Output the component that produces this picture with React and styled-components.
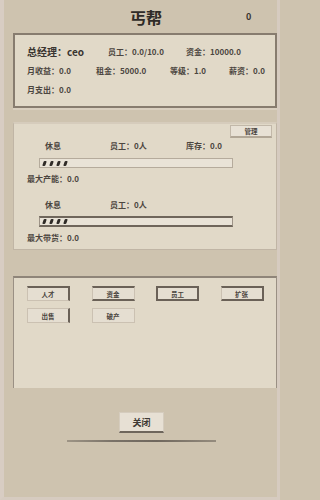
import React from "react";
import styled, { createGlobalStyle, css } from "styled-components";

const GlobalStyle = createGlobalStyle`
  html, body {
    margin: 0;
    padding: 0;
    background: #cec3af;
  }
  * {
    box-sizing: border-box;
  }
`;

const Frame = styled.div`
  width: 280px;
  height: 500px;
  background: #cec3af;
  border-left: 4px solid #d8cdc3;
  border-right: 3px solid #d6cbc0;
  border-bottom: 3px solid #d6cbc0;
  display: flex;
  flex-direction: column;
  font-family: "Noto Sans CJK SC", "Noto Sans", sans-serif;
  color: #46403a;
  overflow: hidden;
`;

const Header = styled.div`
  height: 33px;
  display: flex;
  align-items: center;
  position: relative;
`;

const Title = styled.h1`
  margin: 0 0 0 126px;
  font-size: 16px;
  font-weight: 700;
  color: #2f2b27;
  line-height: 1;
`;

const Count = styled.span`
  margin-left: 84px;
  font-size: 9px;
  font-weight: 700;
  color: #3a3531;
`;

const Panel = styled.section`
  margin-left: 9px;
  margin-top: ${(p) => p.$top || 0}px;
  height: ${(p) => p.$height}px;
  background: #e1d9c8;
  ${(p) =>
    p.$tone === "dark" &&
    css`
      border: 2px solid #877c6f;
      box-shadow: 0 2px 0 #d9cfbf;
    `}
  ${(p) =>
    p.$tone === "light" &&
    css`
      border: 1px solid #c0b5a5;
      border-top: 2px solid #d6ccbc;
    `}
  ${(p) =>
    p.$tone === "mid" &&
    css`
      border: 1px solid #9a9084;
      border-top: 2px solid #8f8579;
      border-bottom: none;
    `}
`;

const InfoBody = styled.div`
  padding: 7px 0 0 12px;
`;

const InfoRow = styled.div`
  display: flex;
  align-items: center;
  height: 19px;
`;

const Cell = styled.span`
  flex: 0 0 ${(p) => (p.$w ? `${p.$w}px` : "auto")};
  font-size: ${(p) => (p.$big ? 10 : 8)}px;
  font-weight: 700;
  color: ${(p) => (p.$big ? "#3a3531" : "#4c463f")};
  white-space: nowrap;
`;

const ToolRow = styled.div`
  display: flex;
  justify-content: flex-end;
  padding: 1px 4px 0 0;
`;

const SmallButton = styled.button`
  width: 42px;
  height: 13px;
  padding: 0;
  font-family: inherit;
  font-size: 6.5px;
  font-weight: 700;
  color: #4a443e;
  background: #e8e1d5;
  border: 1px solid #c2b8a9;
  border-bottom: 2px solid #b1a696;
`;

const WorkRow = styled.div`
  display: flex;
  align-items: center;
  height: 14px;
  padding-left: ${(p) => p.$indent ?? 31}px;
  margin-top: ${(p) => p.$top || 0}px;
`;

const Bar = styled.div`
  margin: ${(p) => p.$top}px 0 0 25px;
  width: 194px;
  height: ${(p) => (p.$strong ? 11 : 10)}px;
  background: #e9e3d7;
  display: flex;
  align-items: center;
  gap: 4px;
  padding-left: 3px;
  ${(p) =>
    p.$strong
      ? css`
          border: 1px solid #9d9387;
          border-top: 2px solid #6f665b;
          border-bottom: 2px solid #6f665b;
        `
      : css`
          border: 1px solid #b5ab9c;
        `}
`;

const Dot = styled.span`
  width: 3px;
  height: 5px;
  background: #2f2b27;
  transform: skewX(-18deg);
  border-radius: 1px;
`;

const ActionGrid = styled.div`
  display: grid;
  grid-template-columns: repeat(4, 42px);
  column-gap: 22.5px;
  row-gap: 7px;
  padding: 8px 0 0 13px;
`;

const edge = (on) => (on ? "#6a6157" : "#cbc1b2");

const ActionButton = styled.button`
  width: 43px;
  height: 15px;
  padding: 0;
  font-family: inherit;
  font-size: 6.5px;
  font-weight: 700;
  color: #4a443e;
  background: #e5ded1;
  border-style: solid;
  border-width: ${(p) =>
    `${p.$e.includes("t") ? 2 : 1}px ${p.$e.includes("r") ? 2 : 1}px ${
      p.$e.includes("b") ? 2 : 1
    }px ${p.$e.includes("l") ? 2 : 1}px`};
  border-color: ${(p) =>
    `${edge(p.$e.includes("t"))} ${edge(p.$e.includes("r"))} ${edge(
      p.$e.includes("b")
    )} ${edge(p.$e.includes("l"))}`};
`;

const Footer = styled.div`
  display: flex;
  flex-direction: column;
  align-items: center;
  margin-top: 24px;
  padding-left: 2px;
`;

const CloseButton = styled.button`
  width: 45px;
  height: 21px;
  padding: 0;
  font-family: inherit;
  font-size: 9px;
  font-weight: 700;
  color: #3f3a35;
  background: #e7e0d4;
  border: 1px solid #d5ccbe;
  border-bottom: 2px solid #6e665c;
`;

const Rule = styled.div`
  margin-top: 7px;
  width: 149px;
  height: 2px;
  background: linear-gradient(
    90deg,
    rgba(110, 102, 92, 0.5),
    #7a7268 30%,
    #6f675d 60%,
    rgba(110, 102, 92, 0.6)
  );
`;

const dots = (
  <>
    <Dot />
    <Dot />
    <Dot />
    <Dot />
  </>
);

const actions = [
  { label: "人才", e: "tr" },
  { label: "资金", e: "tb" },
  { label: "员工", e: "trbl" },
  { label: "扩张", e: "trb" },
  { label: "出售", e: "r" },
  { label: "破产", e: "" },
];

export default function App() {
  return (
    <>
      <GlobalStyle />
      <Frame>
        <Header>
          <Title>丐帮</Title>
          <Count>0</Count>
        </Header>

        <Panel $tone="dark" $height={75}>
          <InfoBody>
            <InfoRow>
              <Cell $w={81} $big>
                总经理：ceo
              </Cell>
              <Cell $w={78}>员工：0.0/10.0</Cell>
              <Cell>资金：10000.0</Cell>
            </InfoRow>
            <InfoRow>
              <Cell $w={69}>月收益：0.0</Cell>
              <Cell $w={74}>租金：5000.0</Cell>
              <Cell $w={59}>等级：1.0</Cell>
              <Cell>薪资：0.0</Cell>
            </InfoRow>
            <InfoRow>
              <Cell>月支出：0.0</Cell>
            </InfoRow>
          </InfoBody>
        </Panel>

        <Panel $tone="light" $top={14} $height={128}>
          <ToolRow>
            <SmallButton>管理</SmallButton>
          </ToolRow>
          <WorkRow>
            <Cell $w={65}>休息</Cell>
            <Cell $w={76}>员工：0人</Cell>
            <Cell>库存：0.0</Cell>
          </WorkRow>
          <Bar $top={6}>{dots}</Bar>
          <WorkRow $indent={13} $top={3}>
            <Cell>最大产能：0.0</Cell>
          </WorkRow>
          <WorkRow $top={12}>
            <Cell $w={65}>休息</Cell>
            <Cell>员工：0人</Cell>
          </WorkRow>
          <Bar $top={5} $strong>
            {dots}
          </Bar>
          <WorkRow $indent={13} $top={3}>
            <Cell>最大带货：0.0</Cell>
          </WorkRow>
        </Panel>

        <Panel $tone="mid" $top={26} $height={112}>
          <ActionGrid>
            {actions.map((a) => (
              <ActionButton key={a.label} $e={a.e}>
                {a.label}
              </ActionButton>
            ))}
          </ActionGrid>
        </Panel>

        <Footer>
          <CloseButton>关闭</CloseButton>
          <Rule />
        </Footer>
      </Frame>
    </>
  );
}
